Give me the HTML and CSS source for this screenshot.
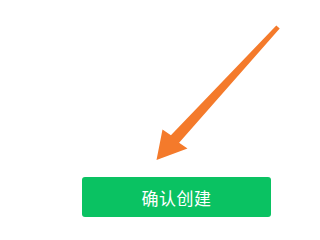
FILE: index.html
```html
<!DOCTYPE html>
<html lang="zh-CN">
<head>
<meta charset="utf-8">
<link rel="stylesheet" href="styles.css">
</head>
<body>
<div class="page">
  <svg class="arrow" width="320" height="177" viewBox="0 0 320 177">
    <polygon fill="#f47a2b" points="276.3,25.4 170.9,135.3 162.5,129.5 156.5,160 187.5,148.5 179.1,142.7 279.7,28.6"/>
  </svg>
  <div class="row">
    <button class="confirm">确认创建</button>
  </div>
</div>
</body>
</html>
```

FILE: styles.css
```css
html, body {
  margin: 0;
  padding: 0;
  background: #ffffff;
}
.page {
  width: 320px;
  height: 240px;
  overflow: hidden;
}
.arrow {
  display: block;
}
.row {
  display: flex;
  padding-left: 82px;
}
.confirm {
  width: 189px;
  height: 40px;
  border: none;
  border-radius: 3px;
  background: #0ac262;
  color: #ffffff;
  font-family: "Noto Sans CJK SC", sans-serif;
  font-size: 17px;
  letter-spacing: 0.5px;
  padding: 0;
  display: flex;
  align-items: center;
  justify-content: center;
}
```
